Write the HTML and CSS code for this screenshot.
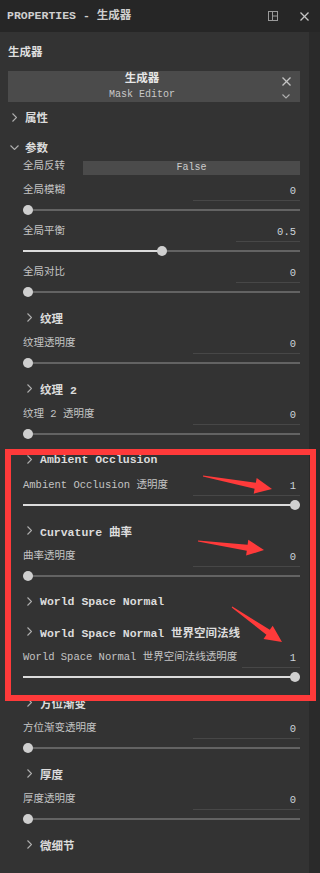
FILE: index.html
```html
<!DOCTYPE html>
<html lang="zh">
<head>
  <meta charset="UTF-8">
  <meta name="viewport" content="width=device-width, initial-scale=1.0">
  <title>Properties - 生成器</title>
  <link rel="stylesheet" href="styles.css">
</head>
<body>
  <div class="panel">
    <div class="titlebar">
      <span class="title">PROPERTIES - 生成器</span>
      <span class="title-icons">
        <svg width="10" height="10" viewBox="0 0 10 10" class="icon-split">
          <rect x="0.5" y="0.5" width="9" height="9" />
          <line x1="4.5" y1="0.5" x2="4.5" y2="9.5" />
          <line x1="4.5" y1="5" x2="9.5" y2="5" />
        </svg>
        <svg width="9" height="9" viewBox="0 0 9 9" class="icon-x">
          <line x1="0.5" y1="0.5" x2="8.5" y2="8.5" />
          <line x1="8.5" y1="0.5" x2="0.5" y2="8.5" />
        </svg>
      </span>
    </div>

    <div class="body">
      <div class="content">
        <div class="group-title">生成器</div>

        <div class="gen-box">
          <div class="gen-text">
            <div class="gen-name">生成器</div>
            <div class="gen-sub">Mask Editor</div>
          </div>
          <div class="gen-tools">
            <svg width="9" height="9" viewBox="0 0 9 9" class="icon-x">
              <line x1="0.5" y1="0.5" x2="8.5" y2="8.5" />
              <line x1="8.5" y1="0.5" x2="0.5" y2="8.5" />
            </svg>
            <svg width="8" height="5" viewBox="0 0 8 5" class="chev">
              <polyline points="0.5,0.5 4,4 7.5,0.5" />
            </svg>
          </div>
        </div>

        <div class="section-head">
          <svg width="5" height="9" viewBox="0 0 5 9" class="chev"><polyline points="0.5,0.5 4.5,4.5 0.5,8.5" /></svg>
          <span>属性</span>
        </div>
        <div class="section-head open">
          <svg width="9" height="5" viewBox="0 0 9 5" class="chev"><polyline points="0.5,0.5 4.5,4.5 8.5,0.5" /></svg>
          <span>参数</span>
        </div>

        <div class="toggle-row">
          <span class="label">全局反转</span>
          <span class="toggle">False</span>
        </div>

        <div class="param">
          <div class="param-top"><span class="label">全局模糊</span><span class="value wide">0</span></div>
          <div class="slider"><div class="track" style="--v:0"><div class="fill"></div><div class="thumb"></div></div></div>
        </div>
        <div class="param">
          <div class="param-top"><span class="label">全局平衡</span><span class="value">0.5</span></div>
          <div class="slider"><div class="track" style="--v:0.5"><div class="fill"></div><div class="thumb"></div></div></div>
        </div>
        <div class="param">
          <div class="param-top"><span class="label">全局对比</span><span class="value">0</span></div>
          <div class="slider"><div class="track" style="--v:0"><div class="fill"></div><div class="thumb"></div></div></div>
        </div>

        <div class="sub-head">
          <svg width="5" height="9" viewBox="0 0 5 9" class="chev"><polyline points="0.5,0.5 4.5,4.5 0.5,8.5" /></svg>
          <span>纹理</span>
        </div>
        <div class="param">
          <div class="param-top"><span class="label">纹理透明度</span><span class="value wide">0</span></div>
          <div class="slider"><div class="track" style="--v:0"><div class="fill"></div><div class="thumb"></div></div></div>
        </div>

        <div class="sub-head">
          <svg width="5" height="9" viewBox="0 0 5 9" class="chev"><polyline points="0.5,0.5 4.5,4.5 0.5,8.5" /></svg>
          <span>纹理 2</span>
        </div>
        <div class="param">
          <div class="param-top"><span class="label">纹理 2 透明度</span><span class="value wide">0</span></div>
          <div class="slider"><div class="track" style="--v:0"><div class="fill"></div><div class="thumb"></div></div></div>
        </div>

        <div class="sub-head">
          <svg width="5" height="9" viewBox="0 0 5 9" class="chev"><polyline points="0.5,0.5 4.5,4.5 0.5,8.5" /></svg>
          <span>Ambient Occlusion</span>
        </div>
        <div class="param">
          <div class="param-top"><span class="label">Ambient Occlusion 透明度</span><span class="value wide">1</span></div>
          <div class="slider"><div class="track" style="--v:1"><div class="fill"></div><div class="thumb"></div></div></div>
        </div>

        <div class="sub-head">
          <svg width="5" height="9" viewBox="0 0 5 9" class="chev"><polyline points="0.5,0.5 4.5,4.5 0.5,8.5" /></svg>
          <span>Curvature 曲率</span>
        </div>
        <div class="param">
          <div class="param-top"><span class="label">曲率透明度</span><span class="value wide">0</span></div>
          <div class="slider"><div class="track" style="--v:0"><div class="fill"></div><div class="thumb"></div></div></div>
        </div>

        <div class="sub-head">
          <svg width="5" height="9" viewBox="0 0 5 9" class="chev"><polyline points="0.5,0.5 4.5,4.5 0.5,8.5" /></svg>
          <span>World Space Normal</span>
        </div>
        <div class="sub-head">
          <svg width="5" height="9" viewBox="0 0 5 9" class="chev"><polyline points="0.5,0.5 4.5,4.5 0.5,8.5" /></svg>
          <span>World Space Normal 世界空间法线</span>
        </div>
        <div class="param">
          <div class="param-top"><span class="label">World Space Normal 世界空间法线透明度</span><span class="value slim">1</span></div>
          <div class="slider"><div class="track" style="--v:1"><div class="fill"></div><div class="thumb"></div></div></div>
        </div>

        <div class="sub-head">
          <svg width="5" height="9" viewBox="0 0 5 9" class="chev"><polyline points="0.5,0.5 4.5,4.5 0.5,8.5" /></svg>
          <span>方位渐变</span>
        </div>
        <div class="param">
          <div class="param-top"><span class="label">方位渐变透明度</span><span class="value wide">0</span></div>
          <div class="slider"><div class="track" style="--v:0"><div class="fill"></div><div class="thumb"></div></div></div>
        </div>

        <div class="sub-head">
          <svg width="5" height="9" viewBox="0 0 5 9" class="chev"><polyline points="0.5,0.5 4.5,4.5 0.5,8.5" /></svg>
          <span>厚度</span>
        </div>
        <div class="param">
          <div class="param-top"><span class="label">厚度透明度</span><span class="value wide">0</span></div>
          <div class="slider"><div class="track" style="--v:0"><div class="fill"></div><div class="thumb"></div></div></div>
        </div>

        <div class="sub-head">
          <svg width="5" height="9" viewBox="0 0 5 9" class="chev"><polyline points="0.5,0.5 4.5,4.5 0.5,8.5" /></svg>
          <span>微细节</span>
        </div>
      </div>
      <div class="scrollbar"></div>
    </div>

    <!-- red markup drawn on top of the screenshot -->
    <svg class="annot" width="320" height="873" viewBox="0 0 320 873">
      <rect x="8" y="452" width="305" height="246" />
      <polygon points="203.1,475.5 255.8,482.8 256.7,477.9 272,489 253.7,493.7 254.6,488.8 202.9,476.5" />
      <polygon points="198.1,540.5 247.6,544.7 248.3,539.8 264,550 246.1,555.6 246.8,550.7 197.9,541.5" />
      <polygon points="232.3,606.6 269.8,629.8 272.7,625.7 282,642 263.5,638.9 266.4,634.8 231.7,607.4" />
    </svg>
  </div>
</body>
</html>
```

FILE: styles.css
```css
* {
  box-sizing: border-box;
  margin: 0;
  padding: 0;
}

body {
  font-family: "Liberation Mono", "Noto Sans CJK SC", monospace;
  background: #333333;
  color: #c6c6c6;
  font-size: 10.5px;
  overflow: hidden;
}

.panel {
  position: relative;
  height: 873px;
  display: flex;
  flex-direction: column;
}

/* Title bar */
.titlebar {
  height: 32px;
  flex-shrink: 0;
  background: #262626;
  display: flex;
  align-items: center;
  padding: 0 11px 0 7px;
}

.title {
  flex: 1;
  font-size: 11.5px;
  font-weight: bold;
  color: #cfcfcf;
  line-height: 16px;
}

.title-icons {
  display: flex;
  align-items: center;
  gap: 22px;
}

.icon-split {
  fill: none;
  stroke: #9a9a9a;
  stroke-width: 1;
}

.icon-x {
  stroke: #c4c4c4;
  stroke-width: 1.2;
}

.chev {
  fill: none;
  stroke: #b0b0b0;
  stroke-width: 1.1;
  flex-shrink: 0;
}

/* Body */
.body {
  flex: 1;
  min-height: 0;
  display: flex;
}

.content {
  flex: 1;
  padding: 0 9px 0 8px;
}

.scrollbar {
  width: 11px;
  background: #2a2a2a;
}

.group-title {
  margin-top: 12px;
  line-height: 18px;
  font-size: 11.5px;
  font-weight: bold;
  color: #dedede;
}

/* Generator box */
.gen-box {
  margin-top: 9px;
  height: 31px;
  background: #4b4b4b;
  display: flex;
}

.gen-text {
  flex: 1;
  padding-top: 1px;
  text-align: center;
}

.gen-name {
  font-size: 11.5px;
  font-weight: bold;
  line-height: 14px;
  color: #e6e6e6;
}

.gen-sub {
  font-size: 10px;
  line-height: 12px;
  padding-top: 3px;
  color: #c8c8c8;
}

.gen-tools {
  width: 24px;
  padding: 6px 4px 0 0;
  display: flex;
  flex-direction: column;
  align-items: center;
  gap: 8px;
}

/* Section headers */
.section-head {
  height: 30px;
  display: flex;
  align-items: center;
  gap: 8px;
  padding-left: 4px;
  font-size: 11.5px;
  font-weight: bold;
  color: #dcdcdc;
}

.section-head.open {
  height: 28px;
  padding-top: 2px;
  padding-left: 2px;
  gap: 6px;
}

.sub-head {
  height: 30px;
  display: flex;
  align-items: center;
  gap: 8px;
  padding: 0 0 1px 19px;
  font-size: 11.5px;
  font-weight: bold;
  color: #dcdcdc;
  white-space: nowrap;
}

/* Rows */
.label {
  line-height: 20px;
  white-space: nowrap;
  color: #c4c4c4;
}

.toggle-row {
  height: 20px;
  display: flex;
  align-items: flex-start;
  padding-left: 15px;
}

.toggle-row .label {
  width: 60px;
  line-height: 12px;
}

.toggle {
  flex: 1;
  height: 14px;
  margin-top: 1px;
  background: #4b4b4b;
  text-align: center;
  font-size: 10px;
  line-height: 14px;
  color: #cccccc;
}

.param {
  height: 41px;
  padding-left: 15px;
}

.param-top {
  height: 21px;
  display: flex;
  justify-content: space-between;
}

.value {
  width: 64px;
  height: 21px;
  border-bottom: 1px solid #474747;
  padding: 3px 4px 0 0;
  line-height: 16px;
  text-align: right;
  color: #cdd3da;
}

.value.wide {
  width: 107px;
}

.value.slim {
  width: 58px;
}

.slider {
  height: 18px;
  display: flex;
  align-items: center;
}

.track {
  position: relative;
  flex: 1;
  height: 2px;
  background: #636363;
}

.fill {
  height: 100%;
  width: calc(5px + var(--v) * (100% - 10px));
  background: #dcdcdc;
}

.thumb {
  position: absolute;
  top: -4px;
  left: calc(var(--v) * (100% - 10px));
  width: 10px;
  height: 10px;
  border-radius: 50%;
  background: #cfcfcf;
}

.track[style="--v:0"] .fill {
  width: 0;
}

/* Red markup overlay */
.annot {
  position: absolute;
  top: 0;
  left: 0;
  pointer-events: none;
}

.annot rect {
  fill: none;
  stroke: #ff3a3a;
  stroke-width: 6;
}

.annot polygon {
  fill: #ff3a3a;
}
```
